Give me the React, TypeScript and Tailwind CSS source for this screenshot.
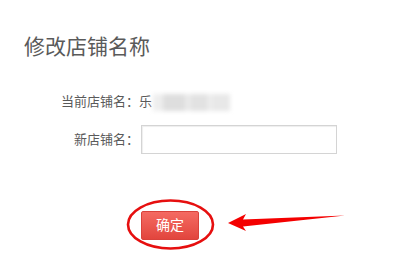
import React from "react";

export default function App() {
  return (
    <div
      className="relative w-[419px] h-[265px] bg-white overflow-hidden text-[#555]"
      style={{ fontFamily: '"Liberation Sans", "Noto Sans CJK SC", sans-serif' }}
    >
      <div className="pl-[24px] pt-[34px] text-[21px] leading-[25px] text-[#5a5a5a]">修改店铺名称</div>

      <div className="mt-[33px] flex items-center h-[20px]">
        <div className="w-[139px] text-right text-[13px] leading-[20px] text-[#5a5a5a]">当前店铺名：</div>
        <div className="text-[13px] leading-[20px] text-[#5a5a5a]">乐</div>
        <div className="ml-[1px] flex h-[17px] w-[77px] blur-[2px]">
          <div className="w-[10px] bg-[#eeeeee]"></div>
          <div className="w-[22px] bg-[#dedede]"></div>
          <div className="w-[6px] bg-[#eaeaea]"></div>
          <div className="w-[16px] bg-[#e2e2e2]"></div>
          <div className="w-[6px] bg-[#ececec]"></div>
          <div className="w-[17px] bg-[#e8e8e8]"></div>
        </div>
      </div>

      <div className="mt-[13px] flex items-center">
        <div className="w-[139px] text-right text-[13px] leading-[20px] text-[#5a5a5a]">新店铺名：</div>
        <div className="ml-[2px] h-[29px] w-[196px] border border-[#d4d4d4] bg-white shadow-[inset_1px_1px_1px_#eee]"></div>
      </div>

      <div className="mt-[57px] ml-[141px] relative w-[58px]">
        <button className="w-[58px] h-[29px] rounded-[2px] border border-[#d9423b] bg-gradient-to-b from-[#f46a62] to-[#e2453d] text-white text-[14px] leading-[27px]">
          确定
        </button>
      </div>

      <svg className="absolute left-0 top-0 pointer-events-none" width="419" height="265" viewBox="0 0 419 265">
        <ellipse cx="170.5" cy="224.5" rx="42.5" ry="24" fill="none" stroke="#e60f0f" strokeWidth="2.6" />
        <polygon points="228,223 246,214 243,219.5 345,215.5 243,226.5 246,231" fill="#f40000" />
      </svg>
    </div>
  );
}
